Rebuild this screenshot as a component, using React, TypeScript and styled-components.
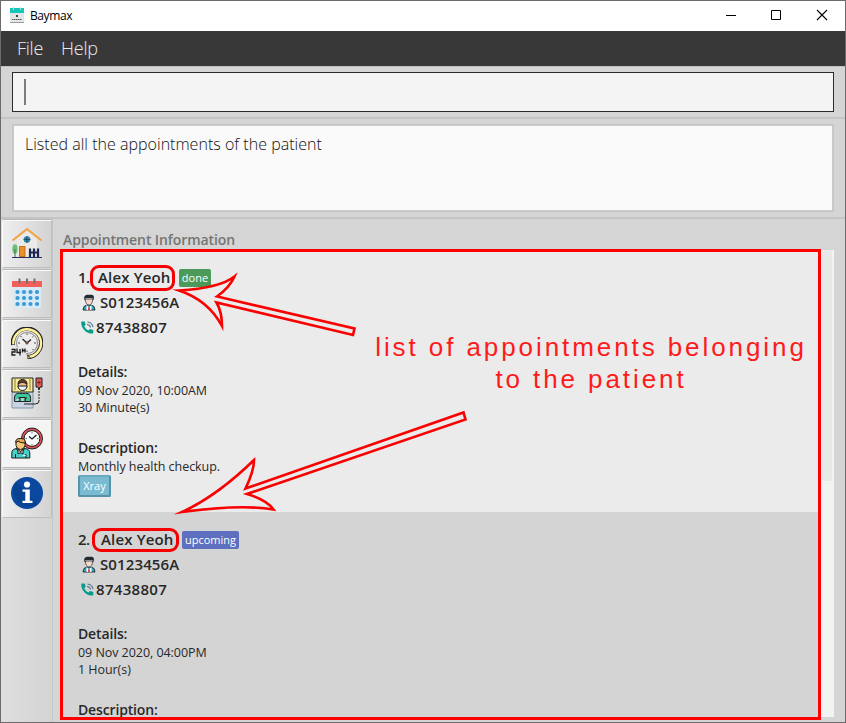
import React from "react";
import styled, { createGlobalStyle } from "styled-components";

const GlobalStyle = createGlobalStyle`
  * { box-sizing: border-box; }
  html, body { margin: 0; padding: 0; overflow: hidden; }
  body { font-family: "Open Sans", "Noto Sans", sans-serif; color: #282828; }
  svg { display: block; flex: none; }
`;

const Window = styled.main`
  position: relative;
  width: 846px;
  height: 723px;
  border: 1px solid #6c6a6b;
  background: #d5d5d5;
  display: flex;
  flex-direction: column;
  overflow: hidden;
`;

const TitleBar = styled.header`
  height: 30px;
  flex: none;
  background: #fff;
  display: flex;
  align-items: center;
  padding: 0 17px 2px 9px;
  gap: 6px;
`;

const AppTitle = styled.span`
  flex: 1;
  padding-top: 1px;
  font-size: 12px;
  line-height: 16px;
  letter-spacing: -0.4px;
  color: #000;
`;

const WindowControls = styled.div`
  display: flex;
  gap: 31px;
`;

const MenuBar = styled.nav`
  height: 35px;
  flex: none;
  background: #383838;
  display: flex;
  padding: 0 16px;
  gap: 18px;
`;

const MenuItem = styled.span`
  font-size: 18px;
  font-weight: 300;
  line-height: 34px;
  letter-spacing: -0.25px;
  color: #ececec;
`;

const CommandArea = styled.section`
  height: 53px;
  flex: none;
  padding: 5px 11px 0;
  border-top: 1px solid #c2c2c2;
  border-bottom: 2px solid #c4c4c4;
`;

const CommandInput = styled.div`
  height: 40px;
  border: 1px solid #2b2b2b;
  background: #f4f4f4;
  padding: 6px 11px;
`;

const Caret = styled.div`
  width: 2px;
  height: 26px;
  background: #7c7c7c;
`;

const ResultArea = styled.section`
  height: 100px;
  flex: none;
  padding: 5px 11px 0;
  border-bottom: 2px solid #c4c4c4;
`;

const ResultBox = styled.div`
  height: 88px;
  border: 1px solid #c6c6c6;
  box-shadow: inset 0 0 0 1px #cbcbcb;
  background: #fafafa;
  padding: 7px 12px;
  font-size: 16px;
  font-weight: 300;
  line-height: 24px;
  letter-spacing: 0.02px;
  color: #111;
`;

const Body = styled.div`
  flex: 1;
  min-height: 0;
  display: flex;
`;

const Sidebar = styled.aside`
  width: 52px;
  flex: none;
  padding: 1px 0 0 1px;
  border-right: 1px solid #c6c6c6;
  background: linear-gradient(90deg, #dedede, #d4d4d4);
`;

const Tab = styled.div<{ $active?: boolean }>`
  height: 48px;
  width: 50px;
  margin-bottom: 2px;
  padding-bottom: 2px;
  border: 1px solid #bdbdbd;
  border-top-color: #fafafa;
  border-left-color: #fafafa;
  border-radius: 2px;
  box-shadow: 0 -1px #b9b9b9;
  background: ${(p) => (p.$active ? "#f4f4f4" : "linear-gradient(90deg, #eeeeee, #d3d3d3)")};
  display: flex;
  align-items: center;
  justify-content: center;
`;

const Content = styled.section`
  flex: 1;
  padding: 0 11px 5px 8px;
  display: flex;
  flex-direction: column;
`;

const Heading = styled.h1`
  margin: 0;
  height: 31px;
  flex: none;
  padding: 11px 0 0 2px;
  font-size: 14px;
  font-weight: 600;
  line-height: 20px;
  letter-spacing: -0.1px;
  color: #747474;
`;

const ListPane = styled.div`
  flex: 1;
  min-height: 0;
  display: flex;
`;

const List = styled.div`
  flex: 1;
  overflow: hidden;
`;

const ScrollTrack = styled.div`
  width: 14px;
  flex: none;
  background: #f3f3f3;
  padding: 0 2px;
`;

const ScrollThumb = styled.div`
  height: 231px;
  border-radius: 3px;
  background: #e8e8e8;
`;

const Card = styled.article<{ $shade?: boolean }>`
  height: 262px;
  padding: 15px 17px 0;
  background: ${(p) => (p.$shade ? "#d4d4d4" : "#ebebeb")};
`;

const CardLine = styled.div`
  height: 25px;
  display: flex;
  align-items: center;
  font-size: 15px;
  font-weight: 600;
  line-height: 18px;
`;

const Index = styled.span<{ $width: number }>`
  width: ${(p) => p.$width}px;
  padding-bottom: 2px;
  letter-spacing: -0.6px;
`;

const Name = styled.span<{ $width: number; $height: number; $inset: number }>`
  width: ${(p) => p.$width}px;
  height: ${(p) => p.$height}px;
  border: 3px solid #f40000;
  border-radius: 9px;
  padding-left: ${(p) => p.$inset}px;
  line-height: ${(p) => p.$height - 8}px;
  letter-spacing: 0.15px;
  white-space: nowrap;
`;

const Status = styled.span<{ $color: string; $width: number; $gap: number }>`
  width: ${(p) => p.$width}px;
  height: 18px;
  margin-left: ${(p) => p.$gap}px;
  border-radius: 2px;
  background: ${(p) => p.$color};
  color: #fff;
  font-size: 11px;
  font-weight: 400;
  line-height: 17px;
  text-align: center;
`;

const Value = styled.span<{ $gap: number; $spacing?: number }>`
  margin-left: ${(p) => p.$gap}px;
  padding-bottom: 2px;
  letter-spacing: ${(p) => p.$spacing ?? 0}px;
`;

const LineIcon = styled.span<{ $gap: number }>`
  margin-left: ${(p) => p.$gap}px;
`;

const Block = styled.div<{ $top: number }>`
  margin-top: ${(p) => p.$top}px;
`;

const Label = styled.div`
  height: 20px;
  font-size: 14px;
  font-weight: 600;
  line-height: 19px;
  letter-spacing: -0.15px;
`;

const Detail = styled.div`
  height: 17px;
  font-size: 12.5px;
  line-height: 17px;
  letter-spacing: -0.05px;
`;

const Tag = styled.span`
  display: block;
  width: 33px;
  height: 22px;
  border: 2px solid #5493a8;
  border-top-color: #6aa9bf;
  border-radius: 2px;
  background: #7abbd2;
  color: #fff;
  font-size: 11px;
  line-height: 18px;
  text-align: center;
`;

const Overlay = styled.div`
  position: absolute;
  inset: -1px;
  pointer-events: none;
`;

const Frame = styled.div`
  position: absolute;
  left: 60px;
  top: 249px;
  width: 761px;
  height: 471px;
  border: 3px solid #fe0000;
`;

const Arrows = styled.svg`
  position: absolute;
  left: 0;
  top: 0;
  fill: none;
  stroke: #fa0000;
  stroke-width: 2.6;
  stroke-miterlimit: 10;
`;

const Note = styled.p`
  position: absolute;
  left: 371px;
  top: 331px;
  width: 440px;
  margin: 0;
  font-family: "Liberation Sans", sans-serif;
  font-size: 26px;
  line-height: 32px;
  letter-spacing: 2.92px;
  text-align: center;
  white-space: pre;
  color: #ff1a1a;
`;

const AppLogo = () => (
  <svg width="14" height="16" viewBox="0 0 14 16">
    <rect x="0" y="1" width="14" height="15" rx="1" fill="#e3e6e6" />
    <rect x="0" y="1" width="14" height="5" fill="#19c5b4" />
    <path d="M3.500 0v3M10.500 0v3" stroke="#9debe2" strokeWidth="1" />
    <path d="M6 8h2v2H6z" fill="#444" />
    <path d="M2 12.500h10" stroke="#555" strokeDasharray="1.500 .5" />
    <path d="M0 15.500h14" stroke="#9b9b9b" />
  </svg>
);

const HomeIcon = () => (
  <svg width="32" height="32" viewBox="0 0 32 32">
    <path d="M6 12 16 4l10 8v17H6z" fill="#eceae6" />
    <path d="M1.500 13.500 16 2l14.500 11.500" fill="none" stroke="#f2a340" strokeWidth="2" />
    <circle cx="16" cy="12.500" r="3.300" fill="#2e87ad" />
    <path d="M16 9v7M12.500 12.500h7" stroke="#173b4f" strokeWidth=".7" />
    <path d="M8.500 19.500h5.500v10H8.500z" fill="#e8912c" stroke="#c56f15" />
    <ellipse cx="4" cy="22" rx="2.700" ry="4.800" fill="#6cc07b" />
    <path d="M4 22v8" stroke="#477b51" />
    <path d="M19 21.500v8.500M23 21.500v8.500M27 21.500v8.500M18 25.500h10" stroke="#1d2756" strokeWidth="2.200" />
    <path d="M1 30.500h30" stroke="#27305e" />
  </svg>
);

const dots = [6.5, 13, 19.5, 26];

const CalendarIcon = () => (
  <svg width="32" height="32" viewBox="0 0 32 32">
    <rect x="2" y="8" width="28" height="23" fill="#d7eaf6" />
    <rect x="1" y="4" width="30" height="6" fill="#f3605c" />
    <path d="M8.500 1.500v5M16 1.500v5M23.500 1.500v5" stroke="#6c7378" strokeWidth="2" />
    {[15, 21, 27].map((y) => dots.map((x) => <circle key={`${x}-${y}`} cx={x} cy={y} r="2.100" fill="#3999d9" />))}
  </svg>
);

const ClockIcon = () => (
  <svg width="32" height="32" viewBox="0 0 32 32">
    <path d="M2 18A14.200 14.200 0 1 1 16.500 30" fill="none" stroke="#222" strokeWidth="4.200" />
    <path d="M2.300 17.300A13.900 13.900 0 1 1 17.300 30" fill="none" stroke="#fff29a" strokeWidth="2.400" />
    <circle cx="16" cy="16" r="10.500" fill="#ededed" stroke="#555" strokeWidth=".6" />
    <path d="M16 16l-4.500-4M16 16l4-3.500" stroke="#222" strokeWidth="1.300" />
    <path d="M16 6.500v1.500M25 16h-2M7 16h2M22.500 9l-1.200 1.200M9.500 9l1.200 1.200M22.500 23l-1-1M16 25v-1.500" stroke="#444" />
    <circle cx="16" cy="16" r="1.200" fill="#d96d40" stroke="#222" strokeWidth=".6" />
    <path d="M0 20.500h15V30H0z" fill="#e6e6e6" />
    <path d="M.5 22.500h3.500v2.500H1v3h3.500M6 21.500v4h4M9 22v6.500M11.500 21.500v4M14 21.500v4M11.500 23.500H14" fill="none" stroke="#1c1c1c" strokeWidth="1.300" />
    <path d="m16 27.500 4 4" stroke="#1c1c1c" strokeWidth="1" />
  </svg>
);

const PatientIcon = () => (
  <svg width="32" height="32" viewBox="0 0 32 32" stroke="#202020">
    <path d="M1 13h21v18H1z" fill="#c8d4e4" stroke="#8595a8" />
    <path d="M1 1h21v14H1z" fill="#f8ed96" />
    <path d="M4 2v11M19 2v11" stroke="#8b7d34" />
    <circle cx="11.500" cy="8.500" r="4.500" fill="#f5b783" />
    <path d="M7 7c0-6 9-6 9 0-3-2-6-2-9 0z" fill="#604028" />
    <path d="M7 9h9c0 6-9 6-9 0z" fill="#e9f4f5" />
    <path d="M3.500 24.500c-1-10 4-8 8-8s9-2 8 8H14V21h2M3.500 24.500H9V21H7" fill="#3ec69b" />
    <path d="M9 20.500h5v4H9z" fill="#8fe0c2" />
    <path d="M13 27h11q4 0 4-3" fill="none" />
    <path d="M25 1h6v9h-2l-1 3-1-3h-2z" fill="#df5a58" />
    <path d="M28 3.500v4M26.300 5.500h3.400" stroke="#7b1f22" />
    <path d="M28 14v10" fill="none" strokeDasharray="2 1" />
  </svg>
);

const AppointmentIcon = () => (
  <svg width="32" height="32" viewBox="0 0 32 32" stroke="#1c1c1c">
    <circle cx="21" cy="11.500" r="10.500" fill="#df5358" />
    <circle cx="21" cy="11.500" r="7.900" fill="#f8fbfc" />
    <path d="m18 9.500 3 2.500 4.500-4" fill="none" strokeWidth="1.300" />
    <path d="M21 5v1.500M21 17v1.500M14.500 11.500H16M26 11.500h1.500" stroke="#777" />
    <path d="M.8 31v-5q0-4 5-4.500h8q5 .5 5 4.500v5z" fill="#48d1ca" />
    <path d="M6 20h7v3l-3.500 3L6 23z" fill="#f6b86c" />
    <path d="M5 15q0-3 4.500-3t4.500 3v3.500q-1 4-4.500 4T5 18.500z" fill="#f9c876" />
    <path d="M5 16q-1-5 5-4.500 5 0 4 4.500-5 0-7-2-1 1-2 2z" fill="#e9a54c" />
    <path d="m7 22 2.500 3 2.500-3v5l-2.500-1.500L7 27zM4.500 27v4M15 27v4" fill="#e8f4f5" />
    <path d="M12 28.500h2.500" stroke="#fff" />
  </svg>
);

const InfoIcon = () => (
  <svg width="32" height="32" viewBox="0 0 32 32">
    <circle cx="16" cy="16" r="16" fill="#0b49a1" />
    <path d="M5 5A16 16 0 0 0 27 27z" fill="#083c8b" opacity=".6" />
    <circle cx="16" cy="7.500" r="3.100" fill="#fff" />
    <path d="M11.500 12.500h7.300v11.300h2.700V26h-10v-2.200h2.800v-9.100h-2.800z" fill="#fff" />
  </svg>
);

const PersonIcon = () => (
  <svg width="14" height="17" viewBox="0 0 14 17">
    <path d="M1 16q0-4.500 4-5h4q4 .5 4 5z" fill="#35a9bd" stroke="#28323a" />
    <path d="m4.500 11 2.500 2.500L9.500 11v5h-5z" fill="#fff" />
    <path d="M6.300 13h1.400l.5 3H5.800z" fill="#dc4451" />
    <path d="M3.500 5h7c.5 8-7.500 8-7 0z" fill="#f8d8c4" stroke="#28323a" strokeWidth=".8" />
    <path d="M2.500 6.500C1.500 2 3 .5 7.500.8 12 .5 12.500 2 11.500 6.500L10.300 4H3.700z" fill="#252b32" />
  </svg>
);

const PhoneIcon = () => (
  <svg width="13" height="13" viewBox="0 0 13 13">
    <path d="M.7.500h3l1 3.200-1.500 1.500q1.400 3 4.200 4.300l1.500-1.500 3.400 1v2.800q0 .8-.8.800C5 12.500.2 7.500.2 1.200Q.2.500.7.500z" fill="#069c8b" />
    <path d="M6 3.500q3 0 3.500 3M6.500 1q4.500.5 5.500 5" fill="none" stroke="#56788d" strokeWidth="1.200" />
  </svg>
);

const tabs = [HomeIcon, CalendarIcon, ClockIcon, PatientIcon, AppointmentIcon, InfoIcon];

type Appointment = {
  index: string;
  indexWidth: number;
  nameWidth: number;
  nameHeight: number;
  nameInset: number;
  status: string;
  statusWidth: number;
  statusGap: number;
  statusColor: string;
  time: string;
  duration: string;
  description?: string;
  tag?: string;
};

const appointments: Appointment[] = [
  { index: "1.", indexWidth: 12, nameWidth: 85, nameHeight: 26, nameInset: 5, status: "done", statusWidth: 32, statusGap: 4, statusColor: "#4b9a5a", time: "09 Nov 2020, 10:00AM", duration: "30 Minute(s)", description: "Monthly health checkup.", tag: "Xray" },
  { index: "2.", indexWidth: 14, nameWidth: 87, nameHeight: 24, nameInset: 6, status: "upcoming", statusWidth: 57, statusGap: 3, statusColor: "#5d6fbe", time: "09 Nov 2020, 04:00PM", duration: "1 Hour(s)" },
];

const AppointmentCard = ({ item, shade }: { item: Appointment; shade: boolean }) => (
  <Card $shade={shade}>
    <CardLine>
      <Index $width={item.indexWidth}>{item.index}</Index>
      <Name $width={item.nameWidth} $height={item.nameHeight} $inset={item.nameInset}>Alex Yeoh</Name>
      <Status $color={item.statusColor} $width={item.statusWidth} $gap={item.statusGap}>{item.status}</Status>
    </CardLine>
    <CardLine>
      <LineIcon $gap={4}><PersonIcon /></LineIcon>
      <Value $gap={4} $spacing={0.12}>S0123456A</Value>
    </CardLine>
    <CardLine>
      <LineIcon $gap={3}><PhoneIcon /></LineIcon>
      <Value $gap={2} $spacing={0.3}>87438807</Value>
    </CardLine>
    <Block $top={22}>
      <Label>Details:</Label>
      <Detail>{item.time}</Detail>
      <Detail>{item.duration}</Detail>
    </Block>
    <Block $top={22}>
      <Label>Description:</Label>
      {item.description && <Detail>{item.description}</Detail>}
      {item.tag && <Tag>{item.tag}</Tag>}
    </Block>
  </Card>
);

export default function App() {
  return (
    <>
      <GlobalStyle />
      <Window>
        <TitleBar>
          <AppLogo />
          <AppTitle>Baymax</AppTitle>
          <WindowControls>
            <svg width="14" height="12" viewBox="0 0 14 12"><path d="M2 6.500h10" stroke="#000" /></svg>
            <svg width="16" height="12" viewBox="0 0 16 12"><path d="M2.500 1.500h9v9h-9z" fill="none" stroke="#000" /></svg>
            <svg width="12" height="12" viewBox="0 0 12 12"><path d="m1 1 10 10M11 1 1 11" stroke="#000" strokeWidth="1.100" /></svg>
          </WindowControls>
        </TitleBar>
        <MenuBar>
          <MenuItem>File</MenuItem>
          <MenuItem>Help</MenuItem>
        </MenuBar>
        <CommandArea>
          <CommandInput><Caret /></CommandInput>
        </CommandArea>
        <ResultArea>
          <ResultBox>Listed all the appointments of the patient</ResultBox>
        </ResultArea>
        <Body>
          <Sidebar>
            {tabs.map((Icon, i) => (
              <Tab key={i} $active={i === 4}><Icon /></Tab>
            ))}
          </Sidebar>
          <Content>
            <Heading>Appointment Information</Heading>
            <ListPane>
              <List>
                {appointments.map((item, i) => (
                  <AppointmentCard key={item.index} item={item} shade={i % 2 === 1} />
                ))}
              </List>
              <ScrollTrack><ScrollThumb /></ScrollTrack>
            </ListPane>
          </Content>
        </Body>
        <Overlay>
          <Frame />
          <Arrows width="846" height="723" viewBox="0 0 846 723">
            <path d="M179 290.500Q220 288 234.500 276.500Q230 287 217 296.500L354.500 328.500L353 335L216.500 302.500Q222 312 222 326Q208 300 179 290.500Z" />
            <path d="M182 512Q217 496 254 460Q254 471 245.500 488.500L463.500 412.500L465.500 419.500L247 494Q267 500 273.500 509.500Q242 504 182 512Z" />
          </Arrows>
          <Note>{"list of appointments belonging\nto the patient"}</Note>
        </Overlay>
      </Window>
    </>
  );
}
